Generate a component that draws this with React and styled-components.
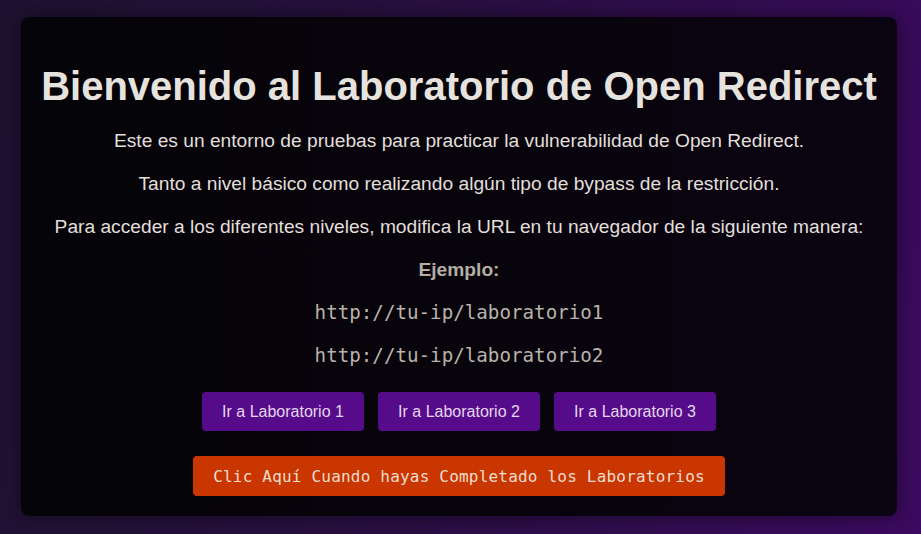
import styled, { createGlobalStyle } from 'styled-components';

const GlobalStyle = createGlobalStyle`
  html, body {
    margin: 0;
    padding: 0;
  }
  body {
    min-height: 534px;
    background: linear-gradient(100deg, #1f1231 0%, #2a0f44 50%, #3c0a60 100%);
    font-family: 'Liberation Sans', Arial, sans-serif;
  }
`;

const labs = [1, 2, 3];

function App() {
  return (
    <>
      <GlobalStyle />
      <Page>
        <Card>
          <Title>Bienvenido al Laboratorio de Open Redirect</Title>
          <Text>Este es un entorno de pruebas para practicar la vulnerabilidad de Open Redirect.</Text>
          <Text>Tanto a nivel básico como realizando algún tipo de bypass de la restricción.</Text>
          <Text>Para acceder a los diferentes niveles, modifica la URL en tu navegador de la siguiente manera:</Text>
          <Label>Ejemplo:</Label>
          <Code>http://tu-ip/laboratorio1</Code>
          <Code>http://tu-ip/laboratorio2</Code>
          <ButtonRow>
            {labs.map((n) => (
              <LabButton key={n}>Ir a Laboratorio {n}</LabButton>
            ))}
          </ButtonRow>
          <DoneButton>Clic Aquí Cuando hayas Completado los Laboratorios</DoneButton>
        </Card>
      </Page>
    </>
  );
}

export default App;

const Page = styled.div`
  padding: 17px 24px 18px 21px;
  height: 534px;
  box-sizing: border-box;
`;

const Card = styled.div`
  height: 100%;
  box-sizing: border-box;
  background: linear-gradient(90deg, #050408 0%, #07040b 50%, #0b0412 100%);
  border-radius: 8px;
  box-shadow: 0 0 20px rgba(0, 0, 0, 0.5);
  display: flex;
  flex-direction: column;
  align-items: center;
  padding-top: 44px;
`;

const Title = styled.h1`
  margin: 0 0 19px;
  font-size: 40px;
  line-height: 50px;
  font-weight: bold;
  white-space: nowrap;
  color: #e6e3df;
`;

const Text = styled.p`
  margin: 0 0 21px;
  font-size: 19.2px;
  line-height: 22px;
  white-space: nowrap;
  color: #e2dfdb;
`;

const Label = styled(Text)`
  font-weight: bold;
  color: #b5aea6;
`;

const Code = styled.p`
  margin: 0 0 21px;
  font-family: 'DejaVu Sans Mono', monospace;
  font-size: 19.2px;
  line-height: 22px;
  color: #b9b2aa;
`;

const ButtonRow = styled.div`
  display: flex;
  gap: 14px;
  margin-top: 4px;
`;

const LabButton = styled.button`
  width: 162px;
  height: 39px;
  border: none;
  border-radius: 4px;
  background: #560c8a;
  color: #e3d6ee;
  font-family: 'Liberation Sans', Arial, sans-serif;
  font-size: 16px;
`;

const DoneButton = styled.button`
  margin-top: 25px;
  width: 532px;
  height: 40px;
  border: none;
  border-radius: 4px;
  background: #c93600;
  color: #f2dccd;
  font-family: 'DejaVu Sans Mono', monospace;
  font-size: 16px;
  letter-spacing: 0.2px;
`;
